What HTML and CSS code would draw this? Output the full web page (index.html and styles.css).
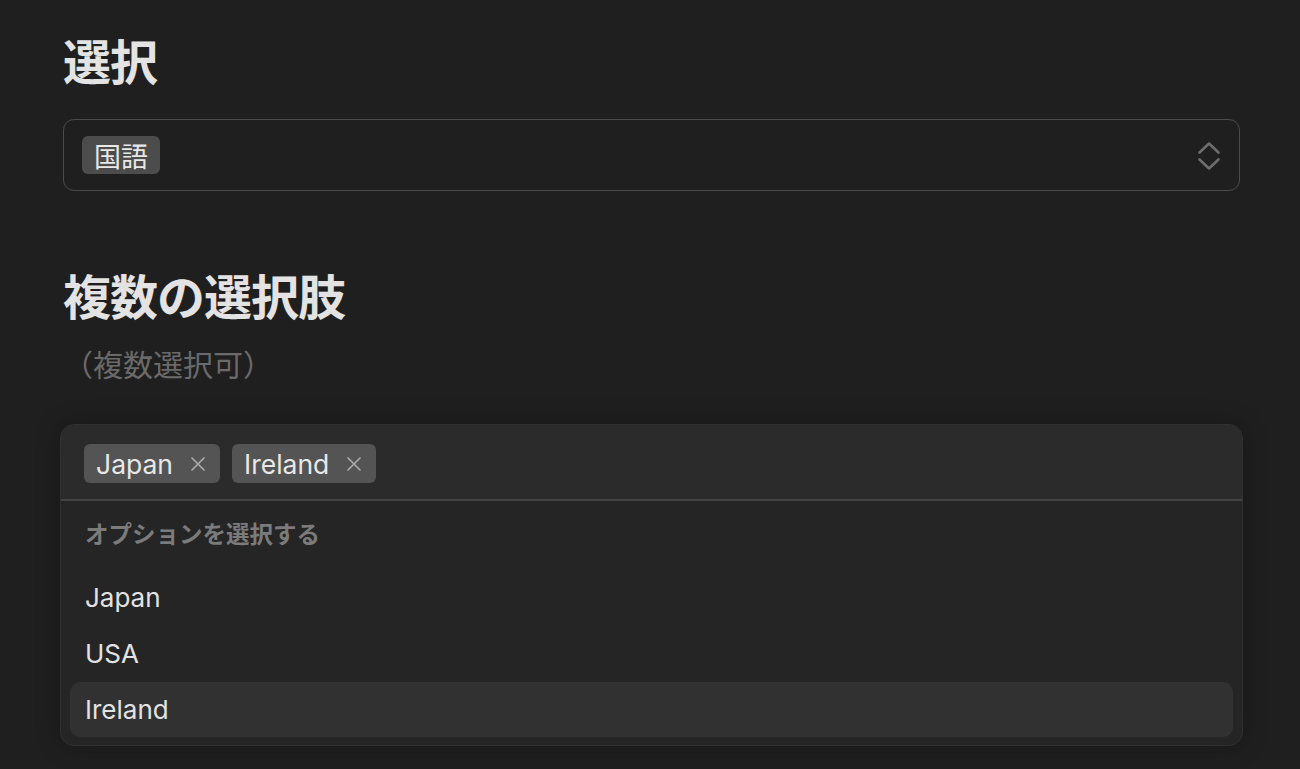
FILE: index.html
```html
<!DOCTYPE html>
<html lang="ja">
<head>
<meta charset="utf-8">
<title>選択</title>
<link rel="stylesheet" href="styles.css">
</head>
<body>
<main class="page">
  <section class="field">
    <h1 class="title">選択</h1>
    <div class="select">
      <span class="chip chip-single">国語</span>
      <svg class="chevrons" width="24" height="30" viewBox="0 0 24 30" aria-hidden="true">
        <path d="M2.5 11.5 L12 2.5 L21.5 11.5" fill="none" stroke="#6e6e6e" stroke-width="2.6" stroke-linecap="round" stroke-linejoin="round"/>
        <path d="M2.5 18.5 L12 27.5 L21.5 18.5" fill="none" stroke="#6e6e6e" stroke-width="2.6" stroke-linecap="round" stroke-linejoin="round"/>
      </svg>
    </div>
  </section>

  <section class="field field-multi">
    <h2 class="title">複数の選択肢</h2>
    <p class="hint">（複数選択可）</p>
    <div class="multi">
      <div class="multi-input">
        <span class="chip">Japan<svg class="x" width="16" height="16" viewBox="0 0 16 16" aria-hidden="true"><path d="M2 2 L14 14 M14 2 L2 14" stroke="#a9a9a9" stroke-width="1.7" stroke-linecap="round"/></svg></span>
        <span class="chip">Ireland<svg class="x" width="16" height="16" viewBox="0 0 16 16" aria-hidden="true"><path d="M2 2 L14 14 M14 2 L2 14" stroke="#a9a9a9" stroke-width="1.7" stroke-linecap="round"/></svg></span>
      </div>
      <div class="menu">
        <div class="menu-label">オプションを選択する</div>
        <div class="option">Japan</div>
        <div class="option">USA</div>
        <div class="option option-active">Ireland</div>
      </div>
    </div>
  </section>
</main>
</body>
</html>
```

FILE: styles.css
```css
* { box-sizing: border-box; }

html, body {
  margin: 0;
  padding: 0;
  background: #1f1f1f;
  height: 100%;
  overflow: hidden;
}

body {
  font-family: "Inter", "Noto Sans CJK JP", sans-serif;
  color: #e2e2e2;
}

.page {
  padding: 30px 60px 0 63px;
}

.title {
  margin: 0;
  font-family: "Noto Sans CJK JP", sans-serif;
  font-weight: 700;
  font-size: 48px;
  line-height: 58px;
  color: #e3e3e3;
  letter-spacing: -1px;
}

.select {
  margin-top: 31px;
  height: 72px;
  border: 1.5px solid #4b4b4b;
  border-radius: 11px;
  display: flex;
  align-items: center;
  justify-content: space-between;
  padding: 0 18px 0 18px;
}

.chip {
  display: inline-flex;
  align-items: center;
  background: #545454;
  border-radius: 6px;
  height: 39px;
  padding: 0 14px 0 12px;
  font-size: 26.5px;
  color: #e8e8e8;
  gap: 17px;
}

.chip-single {
  background: #4c4c4c;
  height: 38px;
  padding: 0 12px;
  font-family: "Noto Sans CJK JP", sans-serif;
  font-size: 27px;
  gap: 0;
}

.chevrons {
  display: block;
  margin-top: 2px;
}

.field-multi {
  margin-top: 74px;
}

.hint {
  margin: 19px 0 0 0;
  font-family: "Noto Sans CJK JP", sans-serif;
  font-size: 30px;
  line-height: 42px;
  color: #6a6a6a;
}

.multi {
  margin: 40px -3px 0 -3px;
  border: 1px solid #303030;
  border-radius: 14px;
  overflow: hidden;
  background: #252525;
  box-shadow: 0 0 24px rgba(0, 0, 0, 0.25);
}

.multi-input {
  background: #2b2b2b;
  height: 76px;
  padding: 19px 23px 0 23px;
  display: flex;
  gap: 12px;
  border-bottom: 2px solid #434343;
}

.x { display: block; }

.menu {
  padding: 0 9px 8px 9px;
}

.menu-label {
  padding: 17px 0 22px 15px;
  font-family: "Noto Sans CJK JP", sans-serif;
  font-weight: 700;
  font-size: 23.5px;
  line-height: 30px;
  color: #7b7b7b;
}

.option {
  height: 56px;
  line-height: 56px;
  padding-left: 15px;
  font-size: 26px;
  color: #e3e3e3;
  border-radius: 10px;
}

.option-active {
  background: #313131;
  height: 55px;
  line-height: 55px;
}
```
